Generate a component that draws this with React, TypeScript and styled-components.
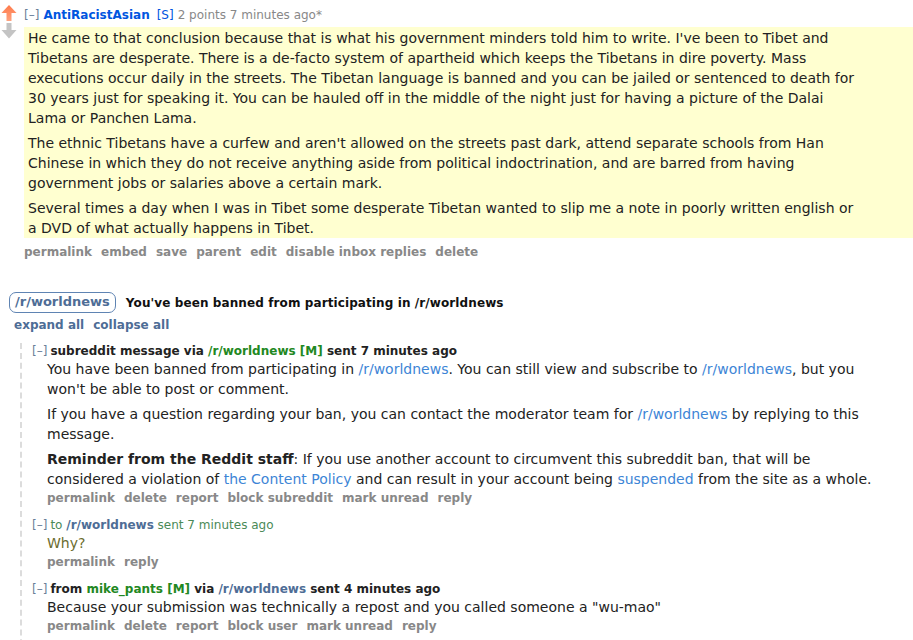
import React from 'react';
import styled, { createGlobalStyle } from 'styled-components';

const GlobalStyle = createGlobalStyle`
  body {
    margin: 0;
    background: #fff;
    font-family: "DejaVu Sans", Verdana, sans-serif;
    color: #222;
  }
`;

const Page = styled.div`
  width: 913px;
  height: 640px;
  overflow: hidden;
`;

/* ---------- top comment ---------- */

const Comment = styled.div`
  display: flex;
  padding-top: 7px;
`;

const Votes = styled.div`
  width: 23px;
  flex: none;
  display: flex;
  flex-direction: column;
  gap: 2px;
  padding-left: 1px;
  margin-top: -3px;
`;

const Entry = styled.div`
  flex: 1;
  min-width: 0;
`;

const Tagline = styled.div`
  font-size: 12px;
  line-height: 16px;
  color: #888;
  white-space: nowrap;
`;

const Expand = styled.span`
  color: #6a7f99;
  margin-right: 4px;
`;

const Author = styled.span`
  color: #0055df;
  font-weight: bold;
  margin-right: 7px;
`;

const Flair = styled.span<{ $color: string }>`
  color: ${({ $color }) => $color};
  margin-right: 4px;
`;

const Md = styled.div<{ $highlight?: boolean }>`
  background: ${({ $highlight }) => ($highlight ? '#ffffd0' : 'transparent')};
  padding: ${({ $highlight }) => ($highlight ? '1px 0 0 4px' : '0')};
  margin-top: ${({ $highlight }) => ($highlight ? '4px' : '0')};
  font-size: 14px;
  line-height: 20px;
  color: #222;
`;

const Para = styled.p<{ $width?: number }>`
  margin: 0 0 5px;
  max-width: ${({ $width }) => $width ?? 840}px;
  &:last-child {
    margin-bottom: 0;
  }
`;

const Link = styled.a`
  color: #3d85d6;
  text-decoration: none;
`;

const Buttons = styled.ul`
  display: flex;
  gap: 9px;
  list-style: none;
  margin: 0;
  padding: 0;
  font-size: 12px;
  font-weight: bold;
  line-height: 16px;
  color: #888;
`;

const ActionLink = styled.li``;

const CommentButtons = styled(Buttons)`
  margin-top: 6px;
`;

/* ---------- message thread ---------- */

const MessageArea = styled.div`
  margin-top: 32px;
  padding-left: 9px;
`;

const TitleRow = styled.div`
  display: flex;
  align-items: center;
  gap: 10px;
`;

const SubredditPill = styled.span`
  border: 1px solid #5f84b3;
  border-radius: 7px;
  padding: 1px 5px 2px;
  font-size: 13px;
  font-weight: bold;
  line-height: 16px;
  color: #4e6d96;
`;

const Title = styled.span`
  font-size: 12px;
  letter-spacing: 0.1px;
  font-weight: bold;
  color: #111;
`;

const ExpandAll = styled.div`
  display: flex;
  gap: 9px;
  margin: 4px 0 0 5px;
  font-size: 12px;
  font-weight: bold;
  line-height: 16px;
  color: #4e6d96;
`;

const Thread = styled.div`
  margin: 10px 0 0 11px;
  border-left: 2px dashed #dcdcdc;
  padding: 0 0 20px 10px;
`;

const Message = styled.div`
  margin-bottom: 10px;
`;

const MessageHead = styled.div<{ $sent?: boolean }>`
  font-size: 12px;
  line-height: 16px;
  font-weight: ${({ $sent }) => ($sent ? 'normal' : 'bold')};
  color: ${({ $sent }) => ($sent ? '#4b8a57' : '#222')};
  white-space: nowrap;
`;

const HeadExpand = styled.span`
  color: #6a7f99;
  font-weight: normal;
  margin-right: 3px;
`;

const GreenName = styled.span`
  color: #228822;
  font-weight: bold;
`;

const SubLink = styled.span`
  color: #4e6d96;
  font-weight: bold;
`;

const MessageBody = styled.div<{ $sent?: boolean }>`
  margin-left: 15px;
  font-size: 14px;
  line-height: 20px;
  color: ${({ $sent }) => ($sent ? '#6b6d2e' : '#222')};
`;

const MessageButtons = styled(Buttons)`
  margin-left: 15px;
  line-height: 18px;
`;

/* ---------- icons ---------- */

const UpArrow = () => (
  <svg width="16" height="17" viewBox="0 0 16 17">
    <defs>
      <linearGradient id="up" x1="0" y1="0" x2="0" y2="1">
        <stop offset="0" stopColor="#ff7a4a" />
        <stop offset="1" stopColor="#ffa27e" />
      </linearGradient>
    </defs>
    <polygon points="8,1 15.5,9 10.5,9 10.5,17 5.5,17 5.5,9 0.5,9" fill="url(#up)" />
  </svg>
);

const DownArrow = () => (
  <svg width="16" height="16" viewBox="0 0 16 16">
    <polygon points="5.5,0 10.5,0 10.5,7 15.5,7 8,15.5 0.5,7 5.5,7" fill="#c4c4c4" />
  </svg>
);

const Actions: React.FC<{ items: string[]; as?: typeof Buttons }> = ({ items, as: As = Buttons }) => (
  <As>
    {items.map((i) => (
      <ActionLink key={i}>{i}</ActionLink>
    ))}
  </As>
);

export default function App() {
  return (
    <Page>
      <GlobalStyle />
      <Comment>
        <Votes>
          <UpArrow />
          <DownArrow />
        </Votes>
        <Entry>
          <Tagline>
            <Expand>[–]</Expand>
            <Author>AntiRacistAsian</Author>
            <Flair $color="#0055df">[S]</Flair>
            2 points 7 minutes ago*
          </Tagline>
          <Md $highlight>
            <Para $width={834}>
              He came to that conclusion because that is what his government minders told him to write. I've been
              to Tibet and Tibetans are desperate. There is a de-facto system of apartheid which keeps the Tibetans
              in dire poverty. Mass executions occur daily in the streets. The Tibetan language is banned and you can
              be jailed or sentenced to death for 30 years just for speaking it. You can be hauled off in the middle
              of the night just for having a picture of the Dalai Lama or Panchen Lama.
            </Para>
            <Para $width={834}>
              The ethnic Tibetans have a curfew and aren't allowed on the streets past dark, attend separate schools
              from Han Chinese in which they do not receive anything aside from political indoctrination, and are
              barred from having government jobs or salaries above a certain mark.
            </Para>
            <Para $width={834}>
              Several times a day when I was in Tibet some desperate Tibetan wanted to slip me a note in poorly
              written english or a DVD of what actually happens in Tibet.
            </Para>
          </Md>
          <Actions
            as={CommentButtons}
            items={['permalink', 'embed', 'save', 'parent', 'edit', 'disable inbox replies', 'delete']}
          />
        </Entry>
      </Comment>

      <MessageArea>
        <TitleRow>
          <SubredditPill>/r/worldnews</SubredditPill>
          <Title>You've been banned from participating in /r/worldnews</Title>
        </TitleRow>
        <ExpandAll>
          <span>expand all</span>
          <span>collapse all</span>
        </ExpandAll>

        <Thread>
          <Message>
            <MessageHead>
              <HeadExpand>[–]</HeadExpand>
              subreddit message via <GreenName>/r/worldnews</GreenName> <GreenName>[M]</GreenName> sent 7 minutes
              ago
            </MessageHead>
            <MessageBody>
              <Para>
                You have been banned from participating in <Link>/r/worldnews</Link>. You can still view and
                subscribe to <Link>/r/worldnews</Link>, but you won't be able to post or comment.
              </Para>
              <Para>
                If you have a question regarding your ban, you can contact the moderator team for{' '}
                <Link>/r/worldnews</Link> by replying to this message.
              </Para>
              <Para>
                <strong>Reminder from the Reddit staff</strong>: If you use another account to circumvent this
                subreddit ban, that will be considered a violation of <Link>the Content Policy</Link> and can result
                in your account being <Link>suspended</Link> from the site as a whole.
              </Para>
            </MessageBody>
            <Actions
              as={MessageButtons}
              items={['permalink', 'delete', 'report', 'block subreddit', 'mark unread', 'reply']}
            />
          </Message>

          <Message>
            <MessageHead $sent>
              <HeadExpand>[–]</HeadExpand>
              to <SubLink>/r/worldnews</SubLink> sent 7 minutes ago
            </MessageHead>
            <MessageBody $sent>
              <Para>Why?</Para>
            </MessageBody>
            <Actions as={MessageButtons} items={['permalink', 'reply']} />
          </Message>

          <Message>
            <MessageHead>
              <HeadExpand>[–]</HeadExpand>
              from <GreenName>mike_pants</GreenName> <GreenName>[M]</GreenName> via <SubLink>/r/worldnews</SubLink>{' '}
              sent 4 minutes ago
            </MessageHead>
            <MessageBody>
              <Para>Because your submission was technically a repost and you called someone a "wu-mao"</Para>
            </MessageBody>
            <Actions
              as={MessageButtons}
              items={['permalink', 'delete', 'report', 'block user', 'mark unread', 'reply']}
            />
          </Message>
        </Thread>
      </MessageArea>
    </Page>
  );
}
